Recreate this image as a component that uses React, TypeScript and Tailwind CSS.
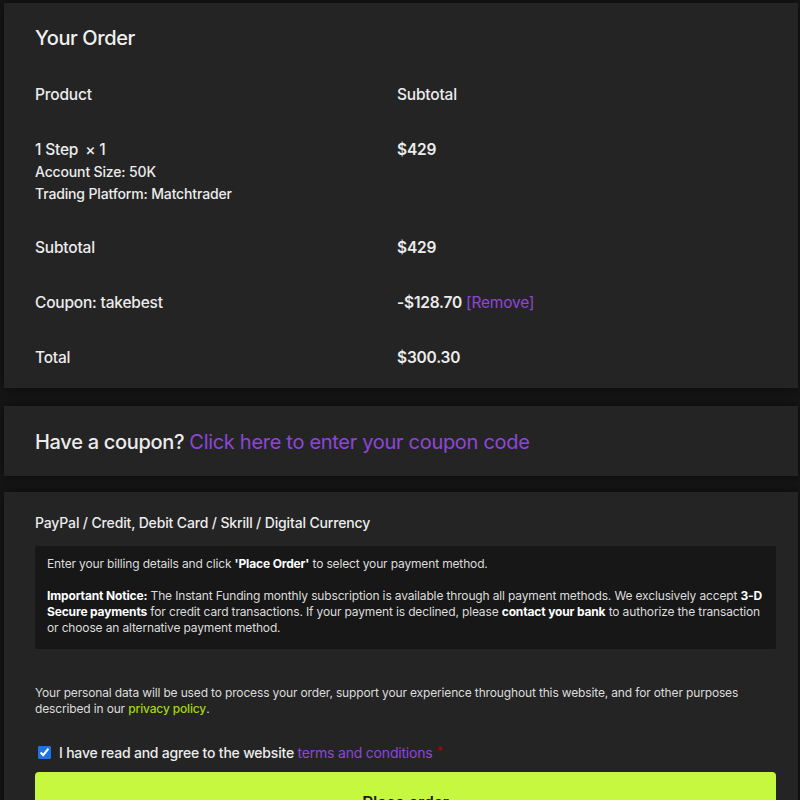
import React, { useState } from 'react';

const rows = [
  { label: 'Subtotal', value: '$429' },
];

export default function App() {
  const [agreed, setAgreed] = useState(true);

  return (
    <div className="min-h-[800px] w-full bg-[#161616] pt-[3px] pl-[4px] pr-[2px] font-['Inter','Noto_Sans',sans-serif] text-[#ececec] overflow-hidden">
      <div className="flex flex-col">
        {/* Order summary */}
        <section className="bg-[#242424] shadow-[0_0_12px_rgba(0,0,0,0.55)] pl-[31px] pr-[22px] pt-[21px] pb-[19px]">
          <h2 className="text-[20px] leading-[28px] font-medium tracking-[-0.4px] text-[#f0f0f0]">Your Order</h2>

          <div className="grid grid-cols-[362px_1fr] mt-[32px] text-[15.5px] font-medium tracking-[-0.2px]">
            <div className="h-[22px] leading-[22px]">Product</div>
            <div className="h-[22px] leading-[22px]">Subtotal</div>

            <div className="mt-[33px]">
              <div className="leading-[22px]">
                1 Step <span className="ml-[3px]">× 1</span>
              </div>
              <div className="text-[14px] leading-[22px] tracking-[-0.15px]">Account Size: 50K</div>
              <div className="text-[14px] leading-[22px] tracking-[-0.15px]">Trading Platform: Matchtrader</div>
            </div>
            <div className="mt-[33px] leading-[22px] font-semibold">$429</div>

            {rows.map((r) => (
              <React.Fragment key={r.label}>
                <div className="mt-[32px] leading-[22px]">{r.label}</div>
                <div className="mt-[32px] leading-[22px] font-semibold">{r.value}</div>
              </React.Fragment>
            ))}

            <div className="mt-[33px] leading-[22px]">Coupon: takebest</div>
            <div className="mt-[33px] leading-[22px]">
              <span className="font-semibold">-$128.70</span>{' '}
              <span className="text-[#8f46d8] font-normal">[Remove]</span>
            </div>

            <div className="mt-[33px] leading-[22px]">Total</div>
            <div className="mt-[33px] leading-[22px] font-semibold">$300.30</div>
          </div>
        </section>

        {/* Coupon */}
        <section className="mt-[18px] bg-[#242424] shadow-[0_0_12px_rgba(0,0,0,0.55)] pl-[31px] pr-[22px] h-[70px] flex items-center">
          <p className="text-[20px] font-medium tracking-[-0.3px] mt-[2px]">
            Have a coupon?{' '}
            <a className="text-[#8f46d8] font-normal cursor-pointer">Click here to enter your coupon code</a>
          </p>
        </section>

        {/* Payment */}
        <section className="mt-[16px] bg-[#242424] shadow-[0_0_12px_rgba(0,0,0,0.55)] pl-[31px] pr-[22px] pt-[21px] pb-[40px]">
          <div className="text-[14px] leading-[20px] font-medium tracking-[-0.15px]">
            PayPal / Credit, Debit Card / Skrill / Digital Currency
          </div>

          <div className="mt-[13px] bg-[#171717] rounded-[2px] px-[12px] pt-[10px] pb-[13px] text-[12px] leading-[16px] tracking-[-0.15px] text-[#dcdcdc]">
            <p>
              Enter your billing details and click <b className="font-bold text-white">'Place Order'</b> to select your payment method.
            </p>
            <p className="mt-[16px]">
              <b className="font-bold text-white">Important Notice:</b> The Instant Funding monthly subscription is available through all payment methods. We exclusively accept <b className="font-bold text-white">3-D Secure payments</b> for credit card transactions. If your payment is declined, please <b className="font-bold text-white">contact your bank</b> to authorize the transaction or choose an alternative payment method.
            </p>
          </div>

          <p className="mt-[36px] text-[12px] leading-[16px] tracking-[-0.15px] text-[#dcdcdc]">
            Your personal data will be used to process your order, support your experience throughout this website, and for other purposes described in our{' '}
            <a className="text-[#a6d60f] font-medium cursor-pointer">privacy policy</a>.
          </p>

          <label className="mt-[25px] flex items-center gap-[8px] text-[14px] font-medium tracking-[-0.2px]">
            <input
              type="checkbox"
              checked={agreed}
              onChange={(e) => setAgreed(e.target.checked)}
              className="w-[13px] h-[13px] ml-[3px] accent-[#1a73e8]"
            />
            <span>
              I have read and agree to the website{' '}
              <a className="text-[#8f46d8] font-normal cursor-pointer">terms and conditions</a>
              <span className="text-[#b00000] ml-[4px] align-top text-[12px]">*</span>
            </span>
          </label>

          <button className="mt-[9px] w-full h-[60px] rounded-[4px] bg-[#c5f83f] text-[#1b1b1b] text-[17px] font-medium flex items-start justify-center pt-[18px] font-['Roboto',sans-serif]">
            Place order
          </button>
        </section>
      </div>
    </div>
  );
}
